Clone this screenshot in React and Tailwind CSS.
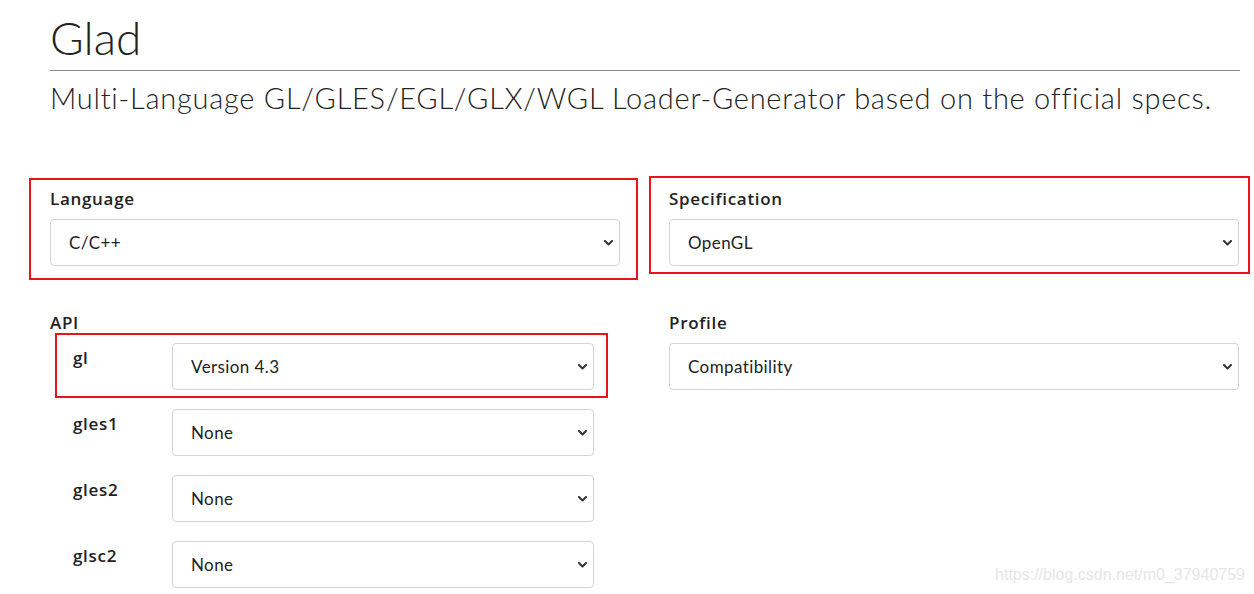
import React from "react";

const Chevron = () => (
  <svg width="9" height="6" viewBox="0 0 9 6" className="shrink-0">
    <path d="M1 1 L4.5 4.5 L8 1" fill="none" stroke="#333" strokeWidth="2" strokeLinecap="round" strokeLinejoin="round" />
  </svg>
);

function FakeSelect({ value }) {
  return (
    <div className="flex h-[47px] items-center justify-between rounded-[4px] border border-[#d4d4d4] bg-white pl-[18px] pr-[6px] text-[17px] tracking-[0.4px] text-[#222]">
      <span>{value}</span>
      <Chevron />
    </div>
  );
}

const apis = [
  { name: "gl", value: "Version 4.3" },
  { name: "gles1", value: "None" },
  { name: "gles2", value: "None" },
  { name: "glsc2", value: "None" },
];

const labelCls = "font-['Open_Sans','Lato',sans-serif] text-[17px] font-semibold leading-[20px] tracking-[0.7px]";

export default function App() {
  return (
    <div className="relative h-[594px] w-[1254px] overflow-hidden bg-white font-['Lato','Open_Sans',sans-serif] text-[#222]">
      <div className="pl-[50px] pr-[14px]">
        {/* header */}
        <h1 className="border-b border-[#888] pb-[4px] pt-[10px] text-[46px] font-light leading-[56px]">Glad</h1>
        <p className="mt-[10px] text-[29px] font-light leading-[34px] tracking-[0.75px]">
          Multi-Language GL/GLES/EGL/GLX/WGL Loader-Generator based on the official specs.
        </p>

        {/* form */}
        <div className="mt-[74px] grid grid-cols-[570px_570px] gap-x-[49px]">
          <div>
            <div className={`mb-[10px] ${labelCls}`}>Language</div>
            <FakeSelect value="C/C++" />

            <div className={`mb-[10px] mt-[47px] ${labelCls}`}>API</div>
            <div className="flex flex-col gap-[19px]">
              {apis.map((a) => (
                <div key={a.name} className="flex items-start pl-[23px] pr-[26px]">
                  <div className={`w-[99px] pt-[5px] ${labelCls}`}>{a.name}</div>
                  <div className="flex-1">
                    <FakeSelect value={a.value} />
                  </div>
                </div>
              ))}
            </div>
          </div>

          <div>
            <div className={`mb-[10px] ${labelCls}`}>Specification</div>
            <FakeSelect value="OpenGL" />

            <div className={`mb-[10px] mt-[47px] ${labelCls}`}>Profile</div>
            <FakeSelect value="Compatibility" />
          </div>
        </div>
      </div>

      {/* red annotation boxes */}
      <div className="pointer-events-none absolute left-[29px] top-[178px] h-[102px] w-[609px] border-2 border-[#e8141c]" />
      <div className="pointer-events-none absolute left-[649px] top-[176px] h-[98px] w-[601px] border-2 border-[#e8141c]" />
      <div className="pointer-events-none absolute left-[55px] top-[333px] h-[65px] w-[553px] border-2 border-[#e8141c]" />

      {/* watermark */}
      <div className="absolute bottom-[7px] right-[9px] font-['Liberation_Sans',Arial,sans-serif] text-[16px] text-[#e6e6e6]">
        https://blog.csdn.net/m0_37940759
      </div>
    </div>
  );
}
